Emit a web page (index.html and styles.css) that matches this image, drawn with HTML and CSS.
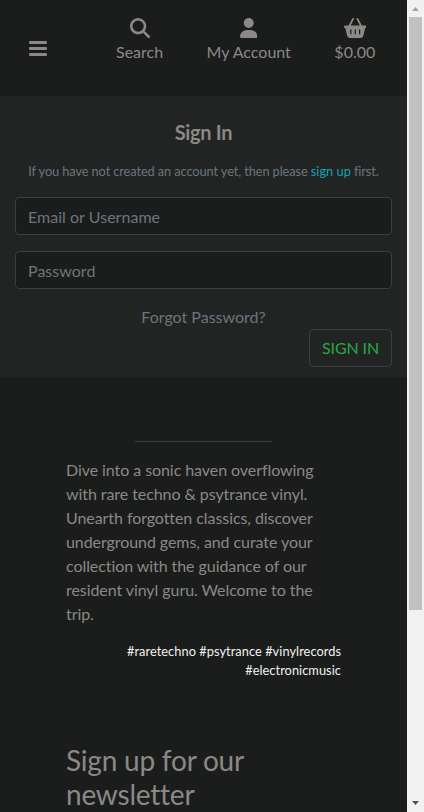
FILE: index.html
```html
<!DOCTYPE html>
<html lang="en">
<head>
<meta charset="utf-8">
<title>Sign In</title>
<link rel="stylesheet" href="styles.css">
</head>
<body>
<div class="viewport">
<div class="page">
  <header class="topbar">
    <button class="menu" aria-label="Menu"><svg class="icon" width="18" height="15" viewBox="0 0 18 15"><rect width="18" height="3" rx="1"/><rect y="6" width="18" height="3" rx="1"/><rect y="12" width="18" height="3" rx="1"/></svg></button>
    <nav class="links">
      <a class="link"><svg class="icon" width="20" height="20" viewBox="0 0 512 512"><path d="M416 208c0 45.9-14.9 88.3-40 122.7L502.6 457.4c12.5 12.5 12.5 32.8 0 45.3s-32.8 12.5-45.3 0L330.7 376c-34.4 25.2-76.8 40-122.7 40C93.1 416 0 322.9 0 208S93.1 0 208 0S416 93.1 416 208zM208 352a144 144 0 1 0 0-288 144 144 0 1 0 0 288z"/></svg><span>Search</span></a>
      <a class="link"><svg class="icon" width="17.5" height="20" viewBox="0 0 448 512"><path d="M224 256A128 128 0 1 0 224 0a128 128 0 1 0 0 256zm-45.7 48C79.8 304 0 383.8 0 482.3C0 498.7 13.3 512 29.7 512H418.3c16.4 0 29.7-13.3 29.7-29.7C448 383.8 368.2 304 269.7 304H178.3z"/></svg><span>My Account</span></a>
      <a class="link"><svg class="icon" width="22.5" height="20" viewBox="0 0 576 512"><path d="M253.3 35.1c6.1-11.8 1.5-26.3-10.2-32.4s-26.3-1.5-32.4 10.2L117.6 192H32c-17.7 0-32 14.3-32 32s14.3 32 32 32L83.9 463.5C91 492 116.6 512 146 512H430c29.4 0 55-20 62.1-48.5L544 256c17.7 0 32-14.3 32-32s-14.3-32-32-32H458.4L365.3 12.9C359.2 1.2 344.7-3.4 332.9 2.7s-16.3 20.6-10.2 32.4L404.3 192H171.7L253.3 35.1zM192 304v96c0 8.8-7.2 16-16 16s-16-7.2-16-16V304c0-8.8 7.2-16 16-16s16 7.2 16 16zm96-16c8.8 0 16 7.2 16 16v96c0 8.8-7.2 16-16 16s-16-7.2-16-16V304c0-8.8 7.2-16 16-16zm128 16v96c0 8.8-7.2 16-16 16s-16-7.2-16-16V304c0-8.8 7.2-16 16-16s16 7.2 16 16z"/></svg><span>$0.00</span></a>
    </nav>
  </header>
  <main class="signin">
    <h1 class="title">Sign In</h1>
    <p class="hint">If you have not created an account yet, then please <a class="signup">sign up</a> first.</p>
    <form class="form">
      <input class="field" type="text" placeholder="Email or Username">
      <input class="field" type="password" placeholder="Password">
      <a class="forgot">Forgot Password?</a>
      <button class="submit" type="button">SIGN IN</button>
    </form>
  </main>
  <footer class="footer">
    <hr class="rule">
    <p class="about">Dive into a sonic haven overflowing with rare techno &amp; psytrance vinyl. Unearth forgotten classics, discover underground gems, and curate your collection with the guidance of our resident vinyl guru. Welcome to the trip.</p>
    <p class="tags">#raretechno #psytrance #vinylrecords #electronicmusic</p>
    <h2 class="newsletter">Sign up for our newsletter</h2>
  </footer>
</div>
<div class="scrollbar">
  <svg class="arrow arrow-up" width="17" height="17" viewBox="0 0 17 17"><path d="M5 11h7L8.5 7z"/></svg>
  <div class="thumb"></div>
  <svg class="arrow arrow-down" width="17" height="17" viewBox="0 0 17 17"><path d="M5 6h7L8.5 10z"/></svg>
</div>
</div>
</body>
</html>
```
FILE: styles.css
```css
* { box-sizing: border-box; }
body {
  margin: 0;
  background: #1b1d1c;
  color: #8c8885;
  font: 400 16px/24px Lato, sans-serif;
  font-variant-ligatures: none;
  overflow: hidden;
}
.viewport { display: flex; height: 812px; }
.page { flex: 1; overflow: hidden; }
.icon { display: block; fill: currentColor; }
.topbar { display: flex; align-items: center; height: 96px; padding-left: 29px; }
.menu { border: 0; padding: 1px 0 0; background: none; color: inherit; }
.links { display: flex; margin-left: 69px; height: 60px; }
.link { display: flex; flex-direction: column; align-items: center; gap: 2px; margin-right: 43.5px; white-space: nowrap; }
.signin { height: 281px; padding: 24px 15px 0; background: #222423; }
.title { margin: 0; font-size: 20px; line-height: 24px; font-weight: 700; letter-spacing: -0.3px; text-align: center; }
.hint { margin: 17px 0 16px; font-size: 12.8px; line-height: 20px; letter-spacing: -0.1px; text-align: center; color: #6c757d; white-space: nowrap; }
.signup { color: #17a2b8; letter-spacing: 0; }
.form { display: flex; flex-direction: column; }
.field {
  height: 38px;
  margin: 0 0 16px;
  padding: 6px 12px;
  border: 1px solid #3d3f3e;
  border-radius: 4px;
  background: #1b1d1c;
  color: #8c8885;
  font: inherit;
}
.field::placeholder { color: #6c757d; opacity: 1; letter-spacing: 0.03px; }
.forgot { align-self: center; color: #6c757d; }
.submit {
  align-self: flex-end;
  height: 38px;
  padding: 6px 12px;
  border: 1px solid #3d3f3e;
  border-radius: 4px;
  background: none;
  color: #28a745;
  font: inherit;
  letter-spacing: -0.12px;
}
.footer { width: 275px; margin: 0 auto; padding-top: 64px; }
.rule { width: 50%; height: 1px; margin: 0 auto 16px; border: 0; background: #3d3f3e; }
.about { margin: 0 0 16px; letter-spacing: -0.07px; }
.tags { margin: 0 0 64px; font-size: 12.8px; line-height: 19px; letter-spacing: 0.05px; text-align: right; color: #f1f1f1; }
.newsletter { margin: 0; font-size: 28px; line-height: 33.6px; font-weight: 400; letter-spacing: -0.22px; }
.scrollbar { display: flex; flex-direction: column; width: 17px; background: #f1f1f1; }
.arrow { display: block; }
.arrow-up { fill: #a3a3a3; }
.arrow-down { margin-top: auto; fill: #505050; }
.thumb { width: 13px; height: 593px; margin-left: 2px; background: #c1c1c1; }
```
